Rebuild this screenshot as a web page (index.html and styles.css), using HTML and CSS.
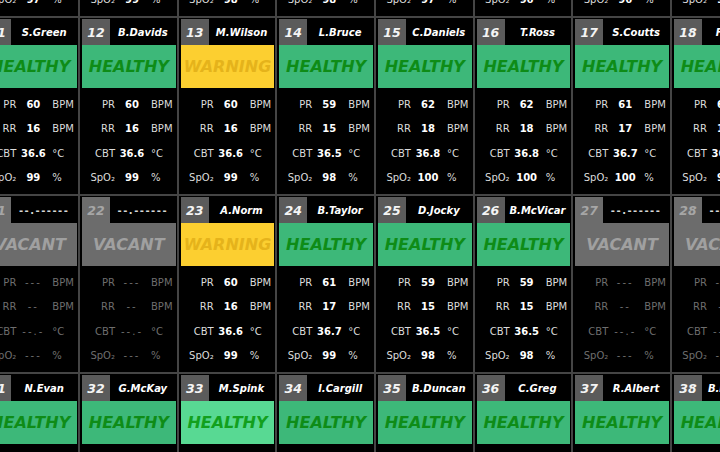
FILE: index.html
```html
<!DOCTYPE html>
<html lang="en">
<head>
  <meta charset="UTF-8" />
  <meta name="viewport" content="width=device-width, initial-scale=1.0"/>
  <title>Ward Monitor</title>
  <link rel="stylesheet" href="styles.css">
</head>
<body>
  <div class="ward" id="ward"></div>

  <script>
    // id, name, status, PR, RR, CBT, SpO2  (no name = vacant bed)
    const beds = [
      [1, "J.Hall", "healthy", 61, 17, "36.7", 97],
      [2, "K.Moore", "healthy", 60, 16, "36.6", 99],
      [3, "P.Reid", "healthy", 59, 15, "36.5", 98],
      [4, "D.Kerr", "healthy", 62, 18, "36.8", 98],
      [5, "A.Bain", "healthy", 60, 16, "36.6", 97],
      [6, "L.Shaw", "healthy", 61, 17, "36.7", 96],
      [7, "R.Muir", "healthy", 61, 17, "36.7", 96],
      [8, "T.Fyfe", "healthy", 60, 16, "36.6", 98],
      [11, "S.Green", "healthy", 60, 16, "36.6", 99],
      [12, "B.Davids", "healthy", 60, 16, "36.6", 99],
      [13, "M.Wilson", "warning", 60, 16, "36.6", 99],
      [14, "L.Bruce", "healthy", 59, 15, "36.5", 98],
      [15, "C.Daniels", "healthy", 62, 18, "36.8", 100],
      [16, "T.Ross", "healthy", 62, 18, "36.8", 100],
      [17, "S.Coutts", "healthy", 61, 17, "36.7", 100],
      [18, "F.Hogg", "healthy", 60, 16, "36.6", 99],
      [21],
      [22],
      [23, "A.Norm", "warning", 60, 16, "36.6", 99],
      [24, "B.Taylor", "healthy", 61, 17, "36.7", 99],
      [25, "D.Jocky", "healthy", 59, 15, "36.5", 98],
      [26, "B.McVicar", "healthy", 59, 15, "36.5", 98],
      [27],
      [28],
      [31, "N.Evan", "healthy", 60, 16, "36.6", 99],
      [32, "G.McKay", "healthy", 60, 16, "36.6", 99],
      [33, "M.Spink", "bright", 60, 16, "36.6", 99],
      [34, "I.Cargill", "healthy", 59, 15, "36.5", 98],
      [35, "B.Duncan", "healthy", 62, 18, "36.8", 100],
      [36, "C.Greg", "healthy", 61, 17, "36.7", 99],
      [37, "R.Albert", "healthy", 60, 16, "36.6", 99],
      [38, "B.Lamont", "healthy", 60, 16, "36.6", 98]
    ];

    const labels = {
      healthy: "HEALTHY",
      bright: "HEALTHY",
      warning: "WARNING",
      vacant: "VACANT"
    };

    function bedCard(b) {
      const [id, name, status, pr, rr, cbt, spo2] = b;
      const vacant = !name;
      const st = vacant ? "vacant" : status;
      const v = vacant ? ["---", "--", "--.-", "---"] : [pr, rr, cbt, spo2];
      const units = ["BPM", "BPM", "°C", "%"];
      const names = ["PR", "RR", "CBT", "SpO₂"];

      let rows = "";
      for (let i = 0; i < 4; i++) {
        rows += `<span class="lbl">${names[i]}</span><span class="val">${v[i]}</span><span class="unit">${units[i]}</span>`;
      }

      return `
        <div class="bed ${vacant ? "is-vacant" : ""}">
          <div class="bed-head">
            <div class="bed-num">${id}</div>
            <div class="bed-name">${vacant ? "--.------" : name}</div>
          </div>
          <div class="status ${st}">${labels[st]}</div>
          <div class="vitals">${rows}</div>
        </div>`;
    }

    document.getElementById("ward").innerHTML = beds.map(bedCard).join("");
  </script>
</body>
</html>
```

FILE: styles.css
```css
body {
  margin: 0;
  background: #000;
  overflow: hidden;
  font-family: "DejaVu Sans", Verdana, sans-serif;
}

/* grid lines come from the ward background showing through the gaps */
.ward {
  display: grid;
  grid-template-columns: repeat(8, 96.67px);
  grid-auto-rows: 176px;
  gap: 2px;
  background: #454545;
  width: max-content;
  margin: -160px 0 0 -18.67px;
}

.bed {
  background: #000;
  padding: 1px 1px 0 2px;
  display: flex;
  flex-direction: column;
}

.bed-head {
  display: flex;
  height: 26px;
}

.bed-num {
  width: 28px;
  background: #5b5b5b;
  color: #f4f4f4;
  font-size: 12.5px;
  font-weight: bold;
  font-style: italic;
  display: flex;
  align-items: center;
  justify-content: center;
}

.bed-name {
  flex: 1;
  color: #fff;
  font-size: 10px;
  font-weight: bold;
  font-style: italic;
  display: flex;
  align-items: center;
  justify-content: center;
  white-space: nowrap;
}

.status {
  height: 43px;
  display: flex;
  align-items: center;
  justify-content: center;
  font-size: 16px;
  font-weight: bold;
  font-style: italic;
}

.status.healthy {
  background: #3db879;
  color: #0e8c17;
}

.status.bright {
  background: #58d993;
  color: #12a01e;
}

.status.warning {
  background: #fccf30;
  color: #e5b31b;
}

.status.vacant {
  background: #6c6c6c;
  color: #a0a0a0;
}

.is-vacant .bed-num {
  background: #6c6c6c;
  color: #a6a6a6;
}

.is-vacant .bed-name {
  color: #d6d6d6;
  font-style: normal;
  letter-spacing: 1.5px;
}

.vitals {
  display: grid;
  grid-template-columns: 33px 30px 1fr;
  column-gap: 2px;
  grid-auto-rows: 24.5px;
  align-items: center;
  padding: 4px 0;
  font-size: 10px;
  color: #dcdcdc;
}

.vitals .lbl {
  text-align: right;
}

.vitals .val {
  text-align: center;
  font-weight: bold;
  color: #fff;
  white-space: nowrap;
}

.vitals .unit {
  padding-left: 2px;
}

.is-vacant .vitals,
.is-vacant .vitals .val {
  color: #6e6e6e;
  font-weight: normal;
}

.is-vacant .vitals .val {
  letter-spacing: 2px;
}
```
